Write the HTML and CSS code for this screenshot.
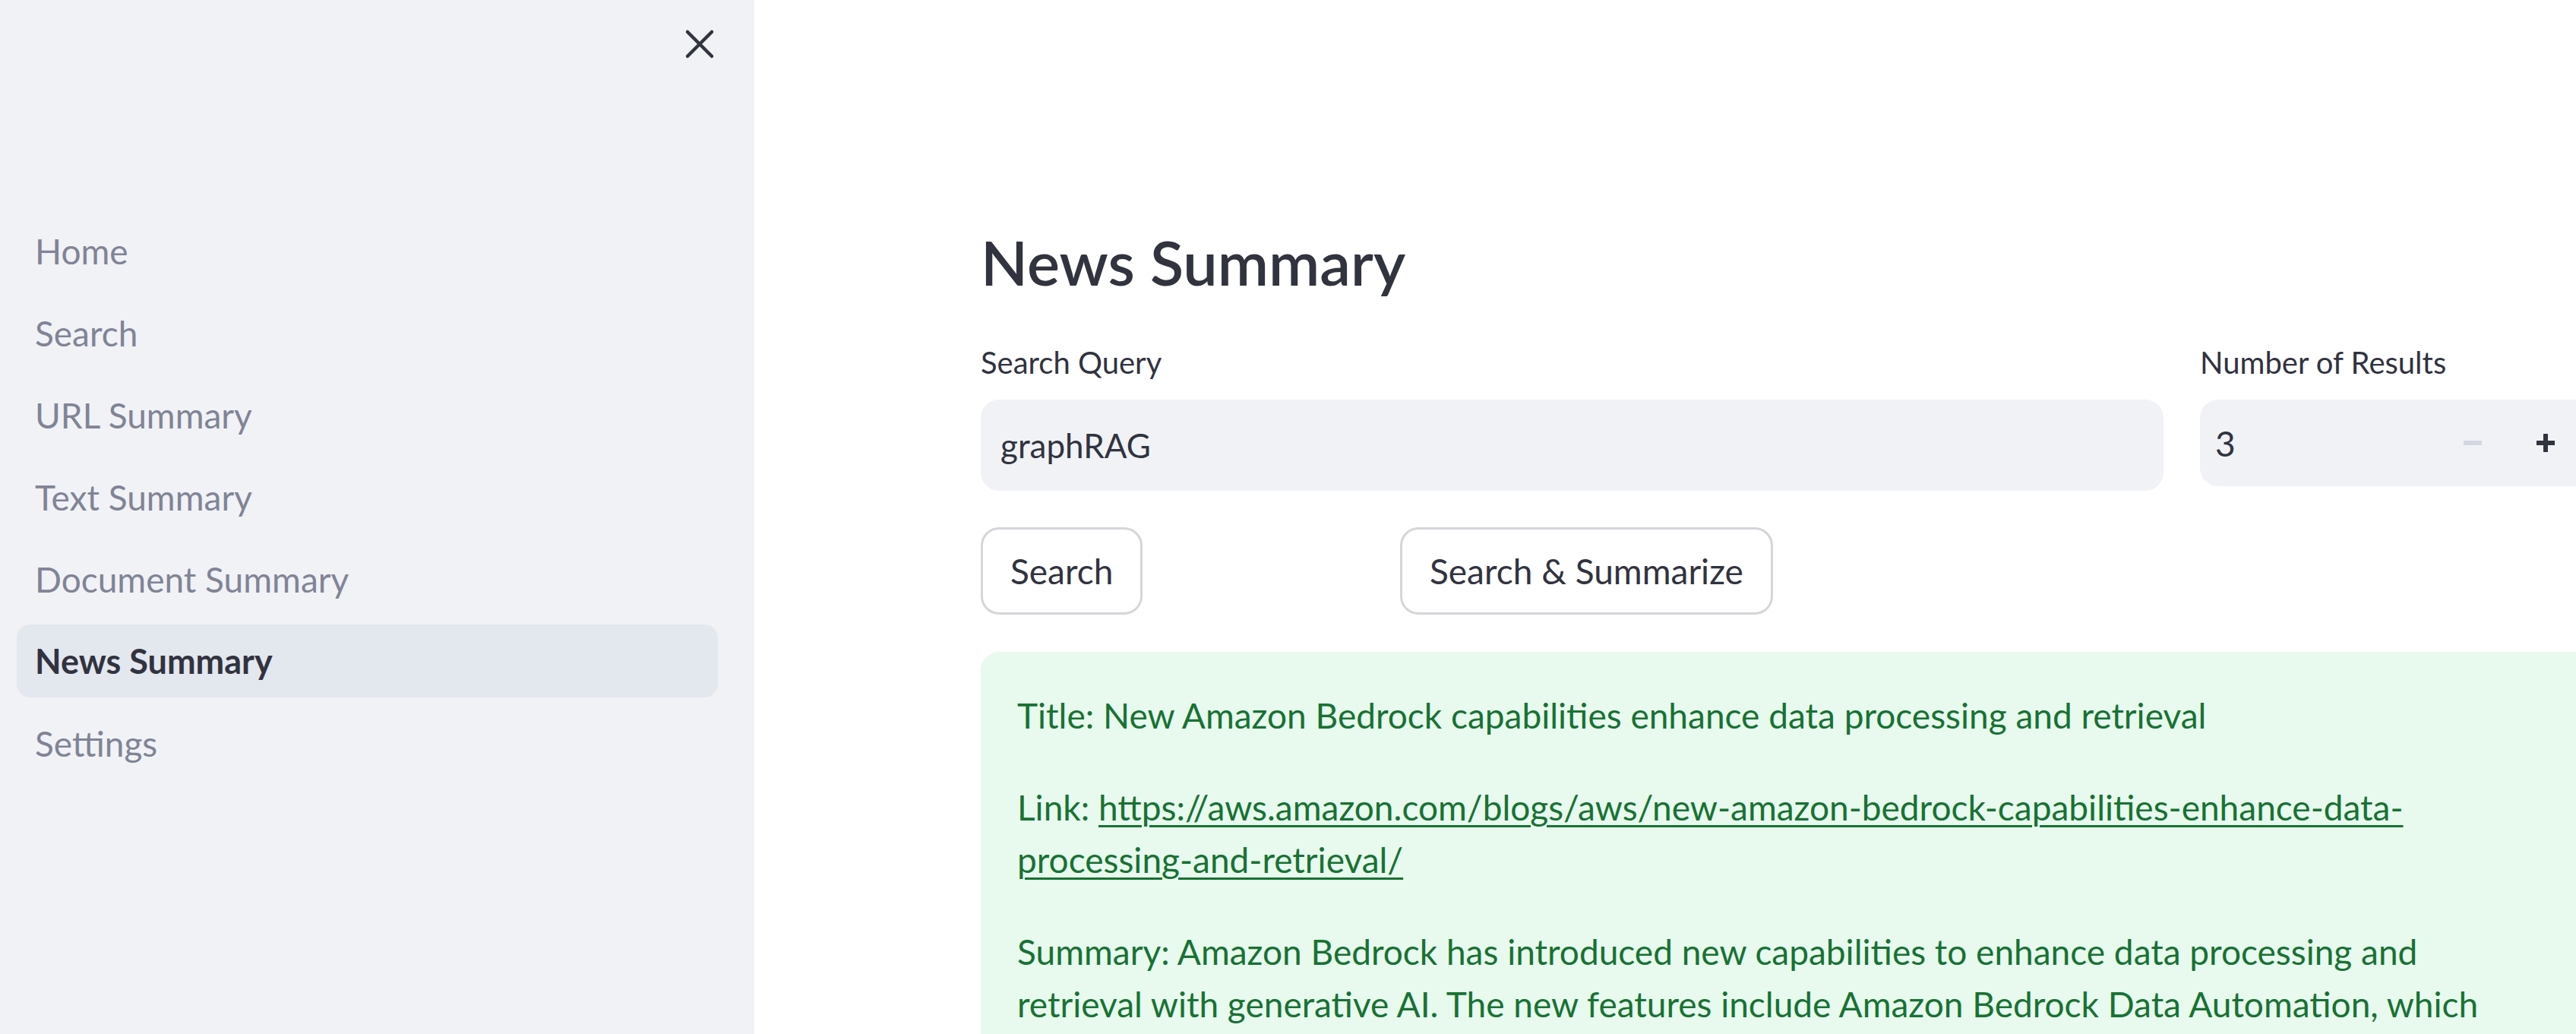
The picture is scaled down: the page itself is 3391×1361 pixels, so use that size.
FILE: index.html
```html
<!DOCTYPE html>
<html lang="en">
<head>
    <meta charset="UTF-8">
    <meta name="viewport" content="width=device-width, initial-scale=1.0">
    <title>News Summary</title>
    <link rel="stylesheet" href="styles.css">
</head>
<body>
    <div class="app">
        <aside class="sidebar">
            <div class="sidebar-header">
                <button class="close-btn" aria-label="Close sidebar">
                    <svg width="48" height="48" viewBox="0 0 48 48">
                        <path d="M8 8 L40 40 M40 8 L8 40" stroke="#31333f" stroke-width="4.5" stroke-linecap="round" fill="none"/>
                    </svg>
                </button>
            </div>
            <nav class="nav">
                <a class="nav-link" href="#">Home</a>
                <a class="nav-link" href="#">Search</a>
                <a class="nav-link" href="#">URL Summary</a>
                <a class="nav-link" href="#">Text Summary</a>
                <a class="nav-link" href="#">Document Summary</a>
                <a class="nav-link active" href="#">News Summary</a>
                <a class="nav-link" href="#">Settings</a>
            </nav>
        </aside>

        <main class="main">
            <div class="block">
                <h2 class="page-title">News Summary</h2>

                <div class="input-row">
                    <div class="field">
                        <label class="field-label">Search Query</label>
                        <div class="text-input">graphRAG</div>
                    </div>
                    <div class="field">
                        <label class="field-label">Number of Results</label>
                        <div class="number-input">
                            <span class="number-value">3</span>
                            <button class="step-btn minus" aria-label="Decrease"><span></span></button>
                            <button class="step-btn plus" aria-label="Increase"><span></span></button>
                        </div>
                    </div>
                </div>

                <div class="button-row">
                    <div><button class="btn">Search</button></div>
                    <div><button class="btn">Search &amp; Summarize</button></div>
                </div>

                <div class="alert-success">
                    <p>Title: New Amazon Bedrock capabilities enhance data processing and retrieval</p>
                    <p>Link: <a href="#">https://aws.amazon.com/blogs/aws/new-amazon-bedrock-capabilities-enhance-data-processing-and-retrieval/</a></p>
                    <p>Summary: Amazon Bedrock has introduced new capabilities to enhance data processing and retrieval with generative AI. The new features include Amazon Bedrock Data Automation, which automates the generation of valuable insights from unstructured multimodal content such as documents, images, audio and videos.</p>
                </div>
            </div>
        </main>
    </div>
</body>
</html>
```

FILE: styles.css
```css
body {
    margin: 0;
    width: 3391px;
    height: 1361px;
    overflow: hidden;
    font-family: 'Lato', 'Noto Sans', sans-serif;
    color: #31333f;
    background: #fff;
}
.app {
    display: flex;
    height: 1361px;
}

/* sidebar */
.sidebar {
    flex: 0 0 993px;
    box-sizing: border-box;
    padding: 0 48px 0 22px;
    background: #f0f2f6;
}
.sidebar-header {
    height: 116px;
    display: flex;
    justify-content: flex-end;
    align-items: center;
}
.close-btn {
    width: 48px;
    height: 48px;
    padding: 0;
    border: none;
    background: none;
    display: flex;
}
.nav {
    margin-top: 166px;
    display: flex;
    flex-direction: column;
    gap: 12px;
}
.nav-link {
    height: 96px;
    display: flex;
    align-items: center;
    padding-left: 24px;
    border-radius: 18px;
    font-size: 46px;
    color: #808495;
    text-decoration: none;
}
.nav-link.active {
    background: #e3e7ee;
    color: #31333f;
    font-weight: 700;
    font-size: 45px;
}

/* main */
.main {
    flex: 1 0 auto;
    padding-left: 298px;
    overflow: hidden;
}
.block {
    width: 2124px;
}
.page-title {
    margin: 296px 0 0;
    font-size: 81px;
    line-height: 1.2;
    font-weight: 600;
    color: #31333f;
}
.input-row {
    margin-top: 59px;
    display: grid;
    grid-template-columns: 3fr 1fr;
    gap: 48px;
}
.field-label {
    display: block;
    font-size: 40px;
    line-height: 50px;
    margin-bottom: 24px;
    color: #31333f;
}
.text-input {
    height: 120px;
    box-sizing: border-box;
    padding-left: 26px;
    display: flex;
    align-items: center;
    background: #f0f2f6;
    border-radius: 24px;
    font-size: 44px;
}
.number-input {
    height: 114px;
    margin-top: 3px;
    box-sizing: border-box;
    padding: 0 16px 0 20px;
    display: flex;
    align-items: center;
    background: #f0f2f6;
    border-radius: 24px;
    font-size: 46px;
}
.number-value {
    flex: 1;
}
.step-btn {
    width: 96px;
    height: 96px;
    padding: 0;
    border: none;
    background: none;
    display: flex;
    align-items: center;
    justify-content: center;
    position: relative;
}
.step-btn span {
    width: 24px;
    height: 6px;
    background: #d3d7df;
}
.plus span {
    background: #31333f;
}
.plus span::after {
    content: "";
    position: absolute;
    left: 45px;
    top: 36px;
    width: 6px;
    height: 24px;
    background: #31333f;
}

.button-row {
    margin-top: 48px;
    display: grid;
    grid-template-columns: 504px 504px;
    gap: 48px;
}
.btn {
    height: 115px;
    padding: 0 36px;
    font-family: inherit;
    font-size: 46px;
    white-space: nowrap;
    color: #31333f;
    background: #fff;
    border: 3px solid #d6d6d9;
    border-radius: 24px;
}

.alert-success {
    margin-top: 49px;
    padding: 49px 48px;
    background: #e8f9ee;
    border-radius: 24px;
    color: #177233;
    font-size: 46px;
    line-height: 69px;
}
.alert-success p {
    max-width: 1950px;
    margin: 0 0 52px;
}
.alert-success a {
    color: #177233;
    text-decoration-thickness: 3px;
    text-underline-offset: 6px;
}
```
